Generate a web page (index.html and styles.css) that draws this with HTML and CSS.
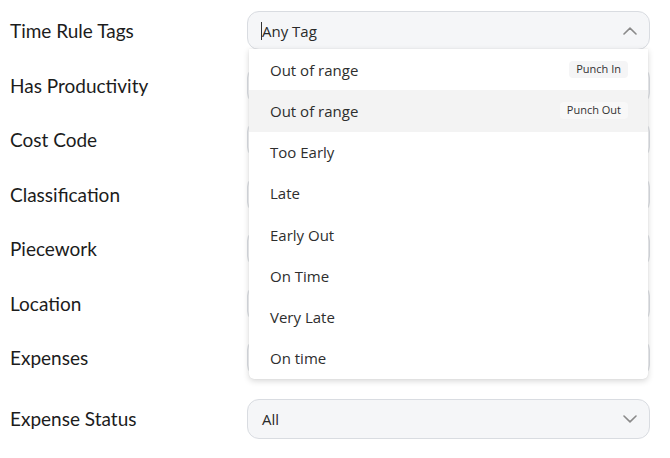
FILE: index.html
```html
<!DOCTYPE html>
<html>
<head>
<meta charset="utf-8">
<link rel="stylesheet" href="styles.css">
</head>
<body>
<div class="form">
  <div class="row">
    <div class="label">Time Rule Tags</div>
    <div class="field open">
      <div class="select">
        <span class="value"><span class="caret"></span>Any Tag</span>
        <svg class="chev" width="14" height="8" viewBox="0 0 14 8"><path d="M1 7 L7 1.2 L13 7" fill="none" stroke="#8a8a8a" stroke-width="1.6" stroke-linecap="round" stroke-linejoin="round"/></svg>
      </div>
      <ul class="menu">
        <li class="item"><span>Out of range</span><span class="badge">Punch In</span></li>
        <li class="item hover"><span>Out of range</span><span class="badge">Punch Out</span></li>
        <li class="item"><span>Too Early</span></li>
        <li class="item"><span>Late</span></li>
        <li class="item"><span>Early Out</span></li>
        <li class="item"><span>On Time</span></li>
        <li class="item"><span>Very Late</span></li>
        <li class="item"><span>On time</span></li>
      </ul>
    </div>
  </div>
  <div class="row"><div class="label">Has Productivity</div><div class="field"><div class="select"></div></div></div>
  <div class="row"><div class="label">Cost Code</div><div class="field"><div class="select"></div></div></div>
  <div class="row"><div class="label">Classification</div><div class="field"><div class="select"></div></div></div>
  <div class="row"><div class="label">Piecework</div><div class="field"><div class="select"></div></div></div>
  <div class="row"><div class="label">Location</div><div class="field"><div class="select"></div></div></div>
  <div class="row"><div class="label">Expenses</div><div class="field"><div class="select"></div></div></div>
  <div class="row last">
    <div class="label">Expense Status</div>
    <div class="field">
      <div class="select tall">
        <span class="value">All</span>
        <svg class="chev" width="14" height="8" viewBox="0 0 14 8"><path d="M1 1 L7 6.8 L13 1" fill="none" stroke="#8a8a8a" stroke-width="1.6" stroke-linecap="round" stroke-linejoin="round"/></svg>
      </div>
    </div>
  </div>
</div>
</body>
</html>
```

FILE: styles.css
```css
html, body {
  margin: 0;
  padding: 0;
  background: #ffffff;
}
.form {
  padding: 11px 20px 0 10px;
  display: flex;
  flex-direction: column;
  gap: 15.5px;
}
.row {
  display: grid;
  grid-template-columns: 237px 1fr;
  align-items: center;
  height: 39px;
}
.row.last {
  margin-top: 6px;
  height: 40px;
}
.label {
  font-family: Lato, "Liberation Sans", sans-serif;
  font-size: 19px;
  color: #1c1c1c;
  line-height: 1;
}
.field {
  position: relative;
  height: 100%;
}
.select {
  box-sizing: border-box;
  height: 39px;
  background: #f5f6f8;
  border: 1px solid #d9dce1;
  border-radius: 12px;
  display: flex;
  align-items: center;
  justify-content: space-between;
  padding: 0 12px 0 14px;
}
.select.tall {
  height: 40px;
}
.value {
  font-family: "Open Sans", "Liberation Sans", sans-serif;
  font-size: 15px;
  color: #2a2a2a;
  display: flex;
  align-items: center;
}
.caret {
  display: inline-block;
  width: 0;
  height: 18px;
  border-left: 1px solid #333333;
  margin-left: -1px;
}
.chev {
  display: block;
}
.menu {
  position: absolute;
  top: 38px;
  left: 2px;
  right: 2px;
  margin: 0;
  padding: 0;
  list-style: none;
  background: #ffffff;
  border-radius: 0 0 5px 5px;
  box-shadow: 0 2px 6px rgba(0, 0, 0, 0.16), 0 0 1px rgba(0, 0, 0, 0.12);
  z-index: 5;
}
.item {
  height: 41.25px;
  display: flex;
  align-items: center;
  justify-content: space-between;
  padding: 0 20px 0 21px;
  font-family: "Open Sans", "Liberation Sans", sans-serif;
  font-size: 15px;
  color: #2e2e2e;
}
.item.hover {
  background: #f3f3f3;
}
.badge {
  font-family: "Open Sans", "Liberation Sans", sans-serif;
  font-size: 11px;
  color: #333333;
  background: #f5f5f6;
  border-radius: 4px;
  padding: 1px 7px 2px;
  line-height: 14px;
}
.item.hover .badge {
  background: #f8f8f8;
}
```
